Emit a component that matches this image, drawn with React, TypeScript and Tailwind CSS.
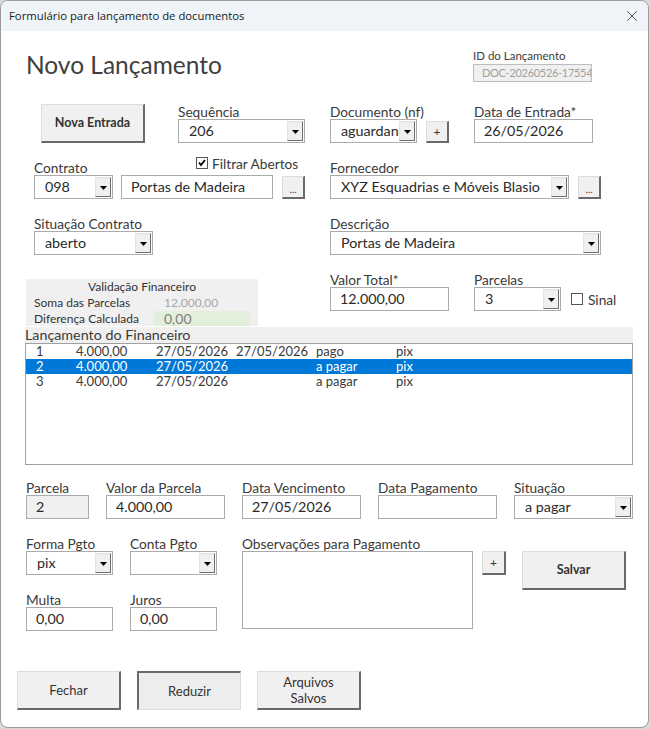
import { X } from "lucide-react";

type Props = { children?: React.ReactNode; className?: string };

function Label({ children, className = "" }: Props) {
  return (
    <div className={`h-[14px] leading-[14px] text-[13.7px] text-[#3a3a3a] whitespace-nowrap ${className}`}>
      {children}
    </div>
  );
}

function Arrow() {
  return (
    <svg width="7" height="4" viewBox="0 0 7 4" className="mt-[2px]">
      <path d="M0 0h7L3.5 4z" fill="#000" />
    </svg>
  );
}

function Combo({ value = "", className = "" }: { value?: string; className?: string }) {
  return (
    <div className={`h-[24px] flex border border-[#ababab] bg-white ${className}`}>
      <div className="flex-1 min-w-0 overflow-hidden whitespace-nowrap pl-[10px] text-[14.3px] leading-[22px] text-[#2a2a2a]">
        {value}
      </div>
      <div className="w-[16px] my-[1px] mr-[1px] flex items-center justify-center bg-[#f0f0f0] border border-t-[#e3e3e3] border-l-[#e3e3e3] border-r-[#6d6d6d] border-b-[#6d6d6d]">
        <Arrow />
      </div>
    </div>
  );
}

function Input({ children, className = "" }: Props) {
  return (
    <div
      className={`h-[24px] border border-[#ababab] bg-white pl-[9px] text-[14.3px] leading-[22px] text-[#2a2a2a] whitespace-nowrap overflow-hidden ${className}`}
    >
      {children}
    </div>
  );
}

function Btn({ children, className = "" }: Props) {
  return (
    <div
      className={`flex items-center justify-center text-center bg-[#f0f0f0] border-t border-l border-r-2 border-b-2 border-t-[#dcdcdc] border-l-[#dcdcdc] border-r-[#6a6a6a] border-b-[#6a6a6a] text-[#333] ${className}`}
    >
      {children}
    </div>
  );
}

function Check({ checked }: { checked?: boolean }) {
  return (
    <div className="w-[12px] h-[12px] border border-[#555] bg-white flex items-center justify-center">
      {checked && (
        <svg width="8" height="8" viewBox="0 0 8 8">
          <path d="M1 3.5L3 6L7 1" stroke="#000" strokeWidth="1.8" fill="none" />
        </svg>
      )}
    </div>
  );
}

const rows = [
  ["1", "4.000,00", "27/05/2026", "27/05/2026", "pago", "pix"],
  ["2", "4.000,00", "27/05/2026", "", "a pagar", "pix"],
  ["3", "4.000,00", "27/05/2026", "", "a pagar", "pix"],
];

export default function App() {
  return (
    <div className="w-[650px] h-[729px] bg-[#d9d9d9] font-['Lato',sans-serif]">
      <div className="w-[649px] h-[728px] bg-white border border-[#9a9a9a] rounded-[8px] overflow-hidden flex flex-col">
        {/* title bar */}
        <div className="h-[30px] shrink-0 bg-[#eef4f7] flex items-center justify-between pl-[8px] pr-[7px]">
          <span className="font-['Open_Sans',sans-serif] text-[11.3px] text-[#1a1a1a]">
            Formulário para lançamento de documentos
          </span>
          <X size={18} strokeWidth={1} className="text-[#222]" />
        </div>

        {/* header */}
        <div className="h-[73px] flex items-start pl-[25px]">
          <div className="w-[447px] mt-[19px] text-[24.5px] leading-[30px] text-[#404040]">Novo Lançamento</div>
          <div className="w-[119px] mt-[16px]">
            <div className="text-[11.5px] leading-[17px] text-[#3a3a3a]">ID do Lançamento</div>
            <div className="h-[18px] border border-[#bdbdbd] bg-[#f0f0f0] pl-[8px] text-[11px] tracking-[-0.3px] leading-[16px] text-[#a0a0a0] whitespace-nowrap overflow-hidden">
              DOC-20260526-17554
            </div>
          </div>
        </div>

        {/* row 1 */}
        <div className="flex items-end pl-[40px] h-[39px]">
          <Btn className="w-[104px] h-[39px] font-bold text-[12.5px]">Nova Entrada</Btn>
          <div className="ml-[33px] w-[127px]">
            <Label>Sequência</Label>
            <Combo value="206" className="w-[127px]" />
          </div>
          <div className="ml-[25px]">
            <Label>Documento (nf)</Label>
            <div className="flex items-end">
              <Combo value="aguardando" className="w-[87px]" />
              <Btn className="ml-[9px] w-[23px] h-[22px] text-[12px]">+</Btn>
            </div>
          </div>
          <div className="ml-[25px] w-[119px]">
            <Label>Data de Entrada*</Label>
            <Input>26/05/2026</Input>
          </div>
        </div>

        {/* row 2 */}
        <div className="flex items-end pl-[33px] mt-[13px]">
          <div className="w-[271px]">
            <div className="h-[19px] flex">
              <Label className="w-[162px] self-end">Contrato</Label>
              <div className="flex items-start gap-[4px] pt-[1px]">
                <Check checked />
                <span className="text-[13.7px] leading-[14px] text-[#3a3a3a]">Filtrar Abertos</span>
              </div>
            </div>
            <div className="flex items-end">
              <Combo value="098" className="w-[79px]" />
              <Input className="ml-[8px] w-[152px]">Portas de Madeira</Input>
              <Btn className="ml-[9px] w-[23px] h-[23px] text-[10px] leading-[10px] pt-[4px]">...</Btn>
            </div>
          </div>
          <div className="ml-[25px]">
            <Label>Fornecedor</Label>
            <div className="flex items-end">
              <Combo value="XYZ Esquadrias e Móveis Blasio" className="w-[239px]" />
              <Btn className="ml-[9px] w-[23px] h-[23px] text-[10px] leading-[10px] pt-[4px]">...</Btn>
            </div>
          </div>
        </div>

        {/* row 3 */}
        <div className="flex items-end pl-[33px] mt-[18px]">
          <div className="w-[119px]">
            <Label>Situação Contrato</Label>
            <Combo value="aberto" />
          </div>
          <div className="ml-[177px] w-[271px]">
            <Label>Descrição</Label>
            <Combo value="Portas de Madeira" />
          </div>
        </div>

        {/* row 4 */}
        <div className="flex items-start pl-[25px] mt-[18px]">
          <div className="w-[232px] h-[47px] mt-[6px] bg-[#f0f0f0] text-[12px] text-[#333]">
            <div className="h-[16px] leading-[16px] text-center">Validação Financeiro</div>
            <div className="h-[16px] leading-[16px] flex">
              <span className="w-[128px] pl-[8px]">Soma das Parcelas</span>
              <span className="pl-[10px] text-[#a6a6a6]">12.000,00</span>
            </div>
            <div className="h-[15px] leading-[15px] flex">
              <span className="w-[128px] pl-[8px]">Diferença Calculada</span>
              <span className="w-[96px] h-[15px] bg-[#e2efda] pl-[10px] text-[14px] text-[#7f7f7f]">0,00</span>
            </div>
          </div>
          <div className="ml-[72px] w-[119px]">
            <Label>Valor Total*</Label>
            <Input>12.000,00</Input>
          </div>
          <div className="ml-[25px] w-[87px]">
            <Label>Parcelas</Label>
            <Combo value="3" />
          </div>
          <div className="ml-[10px] mt-[20px] flex items-start gap-[5px]">
            <Check />
            <span className="text-[13.7px] leading-[14px] text-[#3a3a3a]">Sinal</span>
          </div>
        </div>

        {/* list */}
        <div className="ml-[24px] mt-[1px] w-[608px]">
          <div className="h-[16px] bg-[#f0f0f0] text-[14.3px] leading-[16px] text-[#3a3a3a]">Lançamento do Financeiro</div>
          <div className="h-[122px] border border-[#a0a0a0] bg-white text-[13px] text-[#3a3a3a]">
            {rows.map((r, i) => (
              <div
                key={i}
                className={`h-[15px] leading-[15px] grid grid-cols-[40px_80px_80px_80px_80px_80px] pl-[10px] ${
                  i === 1 ? "bg-[#0078d7] text-white" : ""
                }`}
              >
                {r.map((c, j) => (
                  <span key={j} className="whitespace-nowrap">
                    {c}
                  </span>
                ))}
              </div>
            ))}
          </div>
        </div>

        {/* row 5 */}
        <div className="flex items-end pl-[25px] mt-[16px]">
          <div className="w-[63px]">
            <Label>Parcela</Label>
            <Input className="bg-[#f0f0f0]!">2</Input>
          </div>
          <div className="ml-[17px] w-[119px]">
            <Label>Valor da Parcela</Label>
            <Input>4.000,00</Input>
          </div>
          <div className="ml-[17px] w-[119px]">
            <Label>Data Vencimento</Label>
            <Input>27/05/2026</Input>
          </div>
          <div className="ml-[17px] w-[119px]">
            <Label>Data Pagamento</Label>
            <Input />
          </div>
          <div className="ml-[17px] w-[119px]">
            <Label>Situação</Label>
            <Combo value="a pagar" />
          </div>
        </div>

        {/* rows 6-7 */}
        <div className="flex items-start pl-[25px] mt-[18px]">
          <div className="w-[191px]">
            <div className="flex">
              <div className="w-[87px]">
                <Label>Forma Pgto</Label>
                <Combo value="pix" />
              </div>
              <div className="ml-[17px] w-[87px]">
                <Label>Conta Pgto</Label>
                <Combo />
              </div>
            </div>
            <div className="flex mt-[18px]">
              <div className="w-[87px]">
                <Label>Multa</Label>
                <Input>0,00</Input>
              </div>
              <div className="ml-[17px] w-[87px]">
                <Label>Juros</Label>
                <Input>0,00</Input>
              </div>
            </div>
          </div>
          <div className="ml-[25px] w-[231px]">
            <Label>Observações para Pagamento</Label>
            <div className="h-[78px] border border-[#ababab] bg-white" />
          </div>
          <Btn className="ml-[9px] mt-[14px] w-[24px] h-[24px] text-[12px]">+</Btn>
          <Btn className="ml-[16px] mt-[14px] w-[104px] h-[39px] font-bold text-[12.5px]">Salvar</Btn>
        </div>

        {/* bottom buttons */}
        <div className="flex pl-[16px] mt-[40px] gap-[16px] text-[13px]">
          <Btn className="w-[104px] h-[39px] pt-[2px]">Fechar</Btn>
          <div className="w-[104px] h-[39px] pt-[2px] flex items-center justify-center bg-[#ededed] border-t-2 border-l-2 border-r border-b border-t-[#6a6a6a] border-l-[#6a6a6a] border-r-[#dcdcdc] border-b-[#dcdcdc] text-[#333]">
            Reduzir
          </div>
          <Btn className="w-[104px] h-[39px] leading-[16px]">
            Arquivos
            <br />
            Salvos
          </Btn>
        </div>
      </div>
    </div>
  );
}
